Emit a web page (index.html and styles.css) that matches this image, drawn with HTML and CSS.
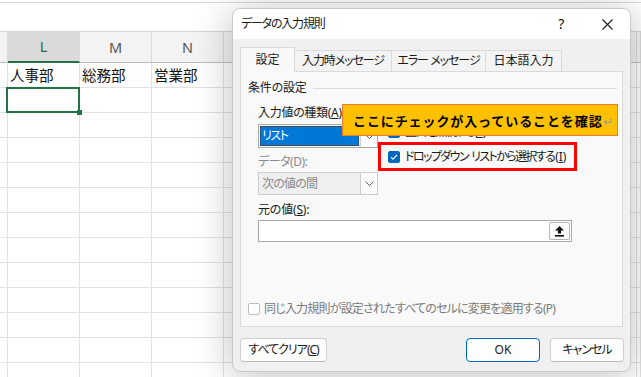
FILE: index.html
```html
<!DOCTYPE html>
<html lang="ja">
<head>
<meta charset="utf-8">
<title>データの入力規則</title>
<link rel="stylesheet" href="styles.css">
</head>
<body>
<div class="app">
  <div class="formula-bar"></div>
  <div class="sheet">
    <div class="hd"></div><div class="hd sel">L</div><div class="hd">M</div><div class="hd">N</div><div class="hd"></div><div class="hd"></div>
    <div class="c"></div><div class="c">人事部</div><div class="c">総務部</div><div class="c">営業部</div><div class="c"></div><div class="c"></div>
    <div class="c"></div><div class="c active"></div><div class="c"></div><div class="c"></div><div class="c"></div><div class="c"></div>
    <div class="c"></div><div class="c"></div><div class="c"></div><div class="c"></div><div class="c"></div><div class="c"></div>
    <div class="c"></div><div class="c"></div><div class="c"></div><div class="c"></div><div class="c"></div><div class="c"></div>
    <div class="c"></div><div class="c"></div><div class="c"></div><div class="c"></div><div class="c"></div><div class="c"></div>
    <div class="c"></div><div class="c"></div><div class="c"></div><div class="c"></div><div class="c"></div><div class="c"></div>
    <div class="c"></div><div class="c"></div><div class="c"></div><div class="c"></div><div class="c"></div><div class="c"></div>
    <div class="c"></div><div class="c"></div><div class="c"></div><div class="c"></div><div class="c"></div><div class="c"></div>
    <div class="c"></div><div class="c"></div><div class="c"></div><div class="c"></div><div class="c"></div><div class="c"></div>
    <div class="c"></div><div class="c"></div><div class="c"></div><div class="c"></div><div class="c"></div><div class="c"></div>
    <div class="c"></div><div class="c"></div><div class="c"></div><div class="c"></div><div class="c"></div><div class="c"></div>
    <div class="c"></div><div class="c"></div><div class="c"></div><div class="c"></div><div class="c"></div><div class="c"></div>
    <div class="c"></div><div class="c"></div><div class="c"></div><div class="c"></div><div class="c"></div><div class="c"></div>
  </div>

  <div class="dialog">
    <div class="titlebar">
      <span class="title">データの入力規則</span>
      <span class="tb-btn help">?</span>
      <span class="tb-btn close"><svg width="11" height="11" viewBox="0 0 11 11"><path d="M0.5 0.5 L10.5 10.5 M10.5 0.5 L0.5 10.5" stroke="#1a1a1a" stroke-width="1.1" fill="none"/></svg></span>
    </div>
    <div class="tabs">
      <div class="tab active">設定</div>
      <div class="tab t2">入力時メッセージ</div>
      <div class="tab t3">エラー メッセージ</div>
      <div class="tab t4">日本語入力</div>
    </div>
    <div class="panel">
      <div class="group-title"><span>条件の設定</span><span class="rule"></span></div>
      <div class="group">
        <div class="cols">
          <div class="col-left">
            <div class="lbl first">入力値の種類(<u>A</u>):</div>
            <div class="combo">
              <span class="combo-val"><span class="hl">リスト</span></span>
              <span class="combo-btn"><svg width="9" height="5" viewBox="0 0 9 5"><path d="M0.5 0.5 L4.5 4.5 L8.5 0.5" stroke="#5a5a5a" fill="none"/></svg></span>
            </div>
            <div class="lbl dis gap">データ(D):</div>
            <div class="combo disabled">
              <span class="combo-val">次の値の間</span>
              <span class="combo-btn"><svg width="9" height="5" viewBox="0 0 9 5"><path d="M0.5 0.5 L4.5 4.5 L8.5 0.5" stroke="#5a5a5a" fill="none"/></svg></span>
            </div>
          </div>
          <div class="col-right">
            <div class="chk c1"><span class="box on"><svg width="12" height="12" viewBox="0 0 12 12"><path d="M3 6.2 L5 8.2 L9 4" stroke="#fff" stroke-width="1.1" fill="none"/></svg></span><span class="txt tight">空白を無視する(<u>B</u>)</span></div>
            <div class="chk c2"><span class="box on"><svg width="12" height="12" viewBox="0 0 12 12"><path d="M3 6.2 L5 8.2 L9 4" stroke="#fff" stroke-width="1.1" fill="none"/></svg></span><span class="txt"><span class="tight">ドロップダウン</span> <span class="tight">リストから選択する</span>(<u>I</u>)</span></div>
          </div>
        </div>
        <div class="lbl src">元の値(<u>S</u>):</div>
        <div class="input">
          <span class="pick"><svg width="9" height="11" viewBox="0 0 9 11"><path d="M4.5 0 L9 4.6 H6.1 V7.6 H2.9 V4.6 H0 Z" fill="#111"/><rect x="0" y="9" width="9" height="1.6" fill="#111"/></svg></span>
        </div>
      </div>
      <div class="chk dis apply"><span class="box"></span><span class="txt">同じ入力規則が設定されたすべてのセルに変更を適用する(P)</span></div>

      <div class="callout">ここにチェックが入っていることを確認<span class="ret">↵</span></div>
      <div class="redbox"></div>
    </div>
    <div class="buttons">
      <button class="btn clear">すべてクリア(<u>C</u>)</button>
      <span class="spacer"></span>
      <button class="btn ok">OK</button>
      <button class="btn cancel">キャンセル</button>
    </div>
  </div>
</div>
</body>
</html>
```

FILE: styles.css
```css
* { box-sizing: border-box; }
html, body { margin: 0; padding: 0; }
body {
  width: 641px;
  height: 377px;
  overflow: hidden;
  background: #fff;
  font-family: "Noto Sans CJK JP", "Noto Sans", sans-serif;
}
.app { position: relative; width: 641px; height: 377px; overflow: hidden; }

/* spreadsheet */
.formula-bar {
  margin-top: 2px;
  height: 29px;
  border-top: 1px solid #d6d6d6;
}
.sheet {
  display: grid;
  grid-template-columns: 8px 72px 72px 72px 413px 1fr;
  grid-template-rows: 32px;
  grid-auto-rows: 25px;
}
.hd {
  background: #f3f3f3;
  border-top: 1px solid #d4d4d4;
  border-right: 1px solid #dadada;
  border-bottom: 1px solid #bdbdbd;
  font-family: "Noto Sans", sans-serif;
  font-size: 14.5px;
  line-height: 1;
  color: #555;
  display: flex;
  align-items: center;
  justify-content: center;
}
.hd.sel {
  background: #dadada;
  color: #1e6b41;
  border-bottom: 2px solid #217346;
}
.c {
  border-right: 1px solid #e1e1e1;
  border-bottom: 1px solid #e1e1e1;
  font-size: 14.5px;
  line-height: 1;
  color: #111;
  display: flex;
  align-items: center;
  padding-left: 2px;
}
.c.active { position: relative; }
.c.active::after {
  content: "";
  position: absolute;
  left: -2px; top: -1px; right: -1px; bottom: -1px;
  border: 2px solid #217346;
}
.c.active::before {
  content: "";
  position: absolute;
  right: -3px; bottom: -3px;
  width: 5px; height: 5px;
  background: #217346;
  z-index: 1;
}

/* dialog */
.dialog {
  position: absolute;
  left: 232px;
  top: 8px;
  width: 399px;
  height: 364px;
  background: #f0f0f0;
  border: 1px solid #c8c8c8;
  border-radius: 8px;
  box-shadow: 0 4px 38px rgba(0, 0, 0, 0.26);
  overflow: hidden;
  font-family: "Noto Sans", "Noto Sans CJK JP", sans-serif;
  font-size: 12px;
  color: #1a1a1a;
  font-feature-settings: "palt";
  letter-spacing: -0.8px;
}
.titlebar {
  height: 30px;
  background: #fff;
  display: flex;
  align-items: center;
}
.title { flex: 1; padding-left: 8px; font-size: 12px; line-height: 1; letter-spacing: -1.2px; }
.tb-btn {
  width: 46px;
  height: 30px;
  display: flex;
  align-items: center;
  justify-content: center;
}
.help { font-size: 14px; line-height: 1; color: #111; }

.tabs {
  height: 32px;
  margin: 0 7px;
  display: flex;
  align-items: flex-end;
}
.tab {
  height: 21px;
  background: #f3f3f3;
  border: 1px solid #dadada;
  border-bottom: none;
  margin-left: -1px;
  display: flex;
  align-items: center;
  justify-content: center;
  font-size: 12px;
  line-height: 1;
  position: relative;
}
.tab.active {
  height: 25px;
  width: 55px;
  margin-left: 0;
  margin-bottom: -1px;
  background: #f9f9f9;
  z-index: 1;
  letter-spacing: 0;
}
.t2 { width: 98px; letter-spacing: -1.1px; }
.t3 { width: 95px; letter-spacing: -1px; }
.t4 { width: 77px; letter-spacing: 0; }

.panel {
  position: relative;
  height: 256px;
  margin: 0 7px;
  background: #f9f9f9;
  border: 1px solid #dadada;
}
.group-title {
  margin-top: 8px;
  padding-left: 7px;
  height: 16px;
  display: flex;
  align-items: center;
  line-height: 16px;
  letter-spacing: -0.2px;
}
.group-title .rule {
  flex: 1;
  margin: 1px 5px 0 6px;
  border-top: 1px solid #dcdcdc;
}
.group { padding-left: 17px; }
.cols { display: flex; gap: 10px; margin-top: 9px; }
.col-left { width: 120px; }
.lbl { line-height: 16px; height: 16px; white-space: nowrap; }
.lbl.first { letter-spacing: -0.3px; }
.lbl.dis { color: #8a8a8a; }
.lbl.gap { margin-top: 6px; letter-spacing: -0.5px; }
.combo {
  margin-top: 3px;
  height: 24px;
  background: #fff;
  border: 1px solid #a8a8a8;
  display: flex;
}
.combo-val { flex: 1; padding: 1px; display: flex; }
.hl {
  flex: 1;
  background: #0078d7;
  color: #fff;
  outline: 1px dotted #333;
  outline-offset: -1px;
  padding-left: 2px;
  line-height: 20px;
  letter-spacing: -1.4px;
}
.combo-btn {
  width: 17px;
  border-left: 1px solid #d0d0d0;
  display: flex;
  align-items: center;
  justify-content: center;
  background: #fff;
}
.combo.disabled {
  margin-top: 2px;
  height: 23px;
  background: #efefef;
  border-color: #cccccc;
}
.combo.disabled .combo-val { color: #8a8a8a; padding-left: 3px; align-items: center; line-height: 1; }
.combo.disabled .combo-btn { background: #fbfbfb; border-left-color: #cccccc; }

.chk {
  display: flex;
  align-items: center;
  gap: 5px;
  height: 16px;
  line-height: 16px;
  white-space: nowrap;
}
.chk.c1 { margin-top: 19px; }
.chk.c2 { margin-top: 9px; letter-spacing: 0; }
.chk .tight { letter-spacing: -1.6px; }
.chk.c2 .tight + .tight { margin-right: 1px; }
.box {
  width: 12px;
  height: 12px;
  border: 1px solid #9a9a9a;
  border-radius: 2px;
  background: #fff;
  display: flex;
  flex: none;
}
.box.on { background: #0067c0; border-color: #0067c0; }
.box svg { margin: -1px; }

.lbl.src { margin-top: 7px; letter-spacing: -0.2px; }
.input {
  margin-top: 2px;
  width: 314px;
  height: 22px;
  background: #fff;
  border: 1px solid #a8a8a8;
  display: flex;
  justify-content: flex-end;
  padding: 1px;
}
.pick {
  width: 21px;
  background: #fff;
  border: 1px solid #b4b4b4;
  border-radius: 2px;
  display: flex;
  align-items: center;
  justify-content: center;
}
.chk.dis { color: #7a7a7a; }
.chk.apply { margin-top: 59px; padding-left: 7px; gap: 4px; letter-spacing: -0.8px; }
.chk.apply .box { border-color: #bdbdbd; }

/* annotations */
.callout {
  position: absolute;
  left: 101px;
  top: 32px;
  width: 276px;
  height: 32px;
  background: #ffc000;
  border: 1px solid #ed7d31;
  padding-left: 10px;
  display: flex;
  align-items: center;
  font-family: "Noto Sans CJK JP", sans-serif;
  font-size: 13px;
  font-weight: 700;
  color: #000;
  letter-spacing: 0.9px;
  font-feature-settings: normal;
  white-space: nowrap;
  z-index: 2;
}
.ret { font-weight: 400; color: #9a9a9a; font-size: 12px; letter-spacing: 0; }
.redbox {
  position: absolute;
  left: 137px;
  top: 70px;
  width: 199px;
  height: 29px;
  border: 3px solid #ff0000;
  z-index: 2;
}

.buttons {
  margin-top: 11px;
  padding: 0 6px 0 7px;
  display: flex;
  gap: 10px;
}
.spacer { flex: 1; }
.btn {
  height: 24px;
  background: #fdfdfd;
  border: 1px solid #d0d0d0;
  border-bottom-color: #b8b8b8;
  border-radius: 4px;
  font-family: inherit;
  font-size: 12px;
  color: #1a1a1a;
  padding: 0;
  line-height: 1;
  font-feature-settings: "palt";
  letter-spacing: -1px;
}
.btn.clear { width: 87px; }
.btn.ok { width: 74px; border: 1px solid #0067c0; letter-spacing: 0; }
.btn.cancel { width: 74px; }
```
